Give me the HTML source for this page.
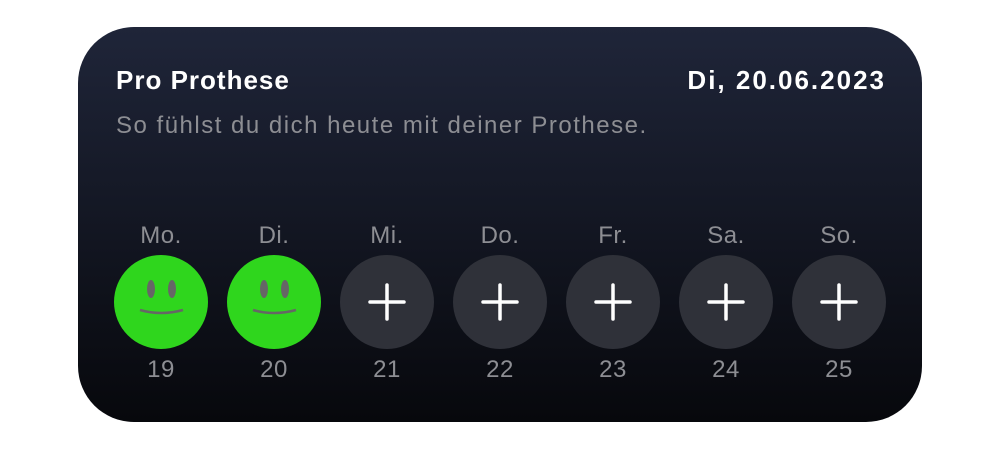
<!DOCTYPE html><html><head><style>
body{margin:0;width:1000px;height:450px;background:#fff;font-family:"Liberation Sans",sans-serif;position:relative;overflow:hidden}
.card{position:absolute;left:78px;top:27px;width:844px;height:395px;border-radius:56px;background:linear-gradient(#1f2539,#07080c)}
.t{position:absolute;color:#fff;font-weight:bold;font-size:26px;line-height:28px}
.s{position:absolute;left:116px;top:112px;color:#8d8e93;font-size:24px;letter-spacing:1.5px;line-height:28px}
.col{position:absolute;top:0;width:94px;text-align:center;color:#8d8e93;font-size:24px;letter-spacing:0.5px}
.l{position:absolute;top:222px;left:-20px;width:134px;line-height:28px}
.n{position:absolute;top:356px;left:-20px;width:134px;line-height:28px}
.c{position:absolute;top:255px;left:0;width:94px;height:94px;border-radius:50%}
</style></head><body><div class="card"></div>
<div class="t" style="left:116px;top:66px;letter-spacing:1px">Pro Prothese</div>
<div class="t" style="right:114px;top:66px;letter-spacing:2px">Di, 20.06.2023</div>
<div class="s">So fühlst du dich heute mit deiner Prothese.</div>
<div class="col" style="left:114px"><div class="l">Mo.</div><div class="c" style="background:#2fd61d"><svg width="94" height="94"><ellipse cx="37" cy="34" rx="4" ry="9" fill="#666"/><ellipse cx="58" cy="34" rx="4" ry="9" fill="#666"/><path d="M26 55 Q47 61 69 55" stroke="#666" stroke-width="2.5" fill="none"/></svg></div><div class="n">19</div></div>
<div class="col" style="left:227px"><div class="l">Di.</div><div class="c" style="background:#2fd61d"><svg width="94" height="94"><ellipse cx="37" cy="34" rx="4" ry="9" fill="#666"/><ellipse cx="58" cy="34" rx="4" ry="9" fill="#666"/><path d="M26 55 Q47 61 69 55" stroke="#666" stroke-width="2.5" fill="none"/></svg></div><div class="n">20</div></div>
<div class="col" style="left:340px"><div class="l">Mi.</div><div class="c" style="background:#2f3139"><svg width="94" height="94"><path d="M47 30V64M30 47H64" stroke="#fff" stroke-width="3.5" stroke-linecap="round"/></svg></div><div class="n">21</div></div>
<div class="col" style="left:453px"><div class="l">Do.</div><div class="c" style="background:#2f3139"><svg width="94" height="94"><path d="M47 30V64M30 47H64" stroke="#fff" stroke-width="3.5" stroke-linecap="round"/></svg></div><div class="n">22</div></div>
<div class="col" style="left:566px"><div class="l">Fr.</div><div class="c" style="background:#2f3139"><svg width="94" height="94"><path d="M47 30V64M30 47H64" stroke="#fff" stroke-width="3.5" stroke-linecap="round"/></svg></div><div class="n">23</div></div>
<div class="col" style="left:679px"><div class="l">Sa.</div><div class="c" style="background:#2f3139"><svg width="94" height="94"><path d="M47 30V64M30 47H64" stroke="#fff" stroke-width="3.5" stroke-linecap="round"/></svg></div><div class="n">24</div></div>
<div class="col" style="left:792px"><div class="l">So.</div><div class="c" style="background:#2f3139"><svg width="94" height="94"><path d="M47 30V64M30 47H64" stroke="#fff" stroke-width="3.5" stroke-linecap="round"/></svg></div><div class="n">25</div></div>
</body></html>
